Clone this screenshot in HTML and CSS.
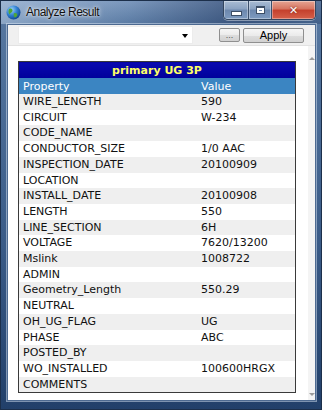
FILE: index.html
```html
<!DOCTYPE html>
<html lang="en">
<head>
  <meta charset="UTF-8">
  <title>Analyze Result</title>
  <link rel="stylesheet" href="styles.css">
</head>
<body>
  <div class="window">
    <div class="titlebar">
      <svg class="app-icon" width="15" height="15" viewBox="0 0 15 15">
        <defs>
          <radialGradient id="globe" cx="0.35" cy="0.3" r="0.8">
            <stop offset="0" stop-color="#9fd4ff"/>
            <stop offset="0.5" stop-color="#2f7fd0"/>
            <stop offset="1" stop-color="#0b3c86"/>
          </radialGradient>
        </defs>
        <circle cx="7.5" cy="7.5" r="7" fill="url(#globe)"/>
        <path d="M3 4 C5 3 7 4 6.5 6 C6 8 4 7.5 3.5 9.5 C2.5 8 2 6 3 4 Z" fill="#4fa53a"/>
        <path d="M8.5 8 C10.5 7.5 12 9 11 11 C10 12.5 8.5 13 8 11.5 C7.6 10.2 7.5 8.5 8.5 8 Z" fill="#4fa53a"/>
      </svg>
      <span class="title">Analyze Result</span>
      <div class="caption-buttons">
        <div class="cap-btn cap-min"><span class="min-glyph"></span></div>
        <div class="cap-btn cap-max"><span class="max-glyph"></span></div>
        <div class="cap-btn cap-close">&#x2715;</div>
      </div>
    </div>

    <div class="client">
      <div class="toolbar">
        <div class="combo"><span class="combo-arrow"></span></div>
        <button class="btn btn-dots">...</button>
        <button class="btn btn-apply">Apply</button>
      </div>

      <div class="panel">
        <div class="panel-body">
          <table class="result">
            <thead>
              <tr><th colspan="2" class="caption">primary UG 3P</th></tr>
              <tr class="head"><th class="col-prop">Property</th><th>Value</th></tr>
            </thead>
            <tbody id="rows"></tbody>
          </table>
        </div>
        <div class="scrollbar">
          <span class="arrow-up"></span>
          <span class="arrow-down"></span>
        </div>
      </div>
    </div>
  </div>

  <script>
    const fields = [
      ['WIRE_LENGTH', '590'],
      ['CIRCUIT', 'W-234'],
      ['CODE_NAME', ''],
      ['CONDUCTOR_SIZE', '1/0 AAC'],
      ['INSPECTION_DATE', '20100909'],
      ['LOCATION', ''],
      ['INSTALL_DATE', '20100908'],
      ['LENGTH', '550'],
      ['LINE_SECTION', '6H'],
      ['VOLTAGE', '7620/13200'],
      ['Mslink', '1008722'],
      ['ADMIN', ''],
      ['Geometry_Length', '550.29'],
      ['NEUTRAL', ''],
      ['OH_UG_FLAG', 'UG'],
      ['PHASE', 'ABC'],
      ['POSTED_BY', ''],
      ['WO_INSTALLED', '100600HRGX'],
      ['COMMENTS', '']
    ];

    const makeRow = ([name, value]) => {
      const tr = document.createElement('tr');
      tr.append(...[name, value].map(text => {
        const td = document.createElement('td');
        td.textContent = text;
        return td;
      }));
      return tr;
    };

    document.getElementById('rows').replaceChildren(...fields.map(makeRow));
  </script>
</body>
</html>
```

FILE: styles.css
```css
body {
  margin: 0;
  font-family: "DejaVu Sans", Verdana, sans-serif;
  background: #2c4a70;
}
.window {
  width: 322px;
  height: 410px;
  box-sizing: border-box;
  display: flex;
  flex-direction: column;
  background: linear-gradient(180deg, #7f9bbf 0px, #55769f 24px, #3a5b87 60%, #22406a 100%);
  border: 1px solid #1c2f4a;
  overflow: hidden;
}
.titlebar {
  height: 23px;
  display: flex;
  align-items: flex-start;
  background: linear-gradient(90deg, rgba(190, 210, 232, 0.5) 0%, rgba(110, 140, 180, 0.15) 40%, rgba(25, 45, 85, 0.5) 75%, rgba(30, 55, 95, 0.35) 100%);
}
.app-icon {
  margin: 4px 0 0 5px;
}
.title {
  margin: 4px 0 0 5px;
  font-family: "Liberation Sans", Arial, sans-serif;
  font-size: 12px;
  letter-spacing: -0.5px;
  color: #101010;
  text-shadow: 0 0 5px rgba(255, 255, 255, 0.9), 0 0 2px rgba(255, 255, 255, 0.8);
}
.caption-buttons {
  margin-left: auto;
  margin-right: 5px;
  display: flex;
  height: 18px;
  border: 1px solid #33465f;
  border-top: none;
  border-radius: 0 0 5px 5px;
  overflow: hidden;
  box-shadow: 0 1px 0 rgba(255, 255, 255, 0.4);
}
.cap-btn {
  display: flex;
  align-items: center;
  justify-content: center;
  background: linear-gradient(180deg, #a9bcd4 0%, #8aa2c1 45%, #6c87ad 50%, #7e9bc0 100%);
  border-right: 1px solid #3b4f6b;
  box-shadow: inset 0 0 0 1px rgba(255, 255, 255, 0.35);
}
.cap-min {
  width: 24px;
}
.cap-max {
  width: 22px;
}
.cap-close {
  width: 43px;
  border-right: none;
  background: linear-gradient(180deg, #e5a493 0%, #d6735f 45%, #c4402c 50%, #d5604a 100%);
  color: #ffffff;
  font-size: 11px;
  font-weight: bold;
  text-shadow: 0 0 2px #6a1a10;
}
.min-glyph {
  width: 9px;
  height: 3px;
  margin-top: 6px;
  background: #ffffff;
  border: 1px solid #3c4e66;
}
.max-glyph {
  width: 7px;
  height: 5px;
  border: 1px solid #3c4e66;
  box-shadow: inset 0 0 0 2px #ffffff;
  background: #6f89ad;
  border-top-width: 2px;
}

.client {
  flex: 1;
  margin: 0 5px 8px 6px;
  display: flex;
  flex-direction: column;
  background: #f0f0f0;
  border: 1px solid #4d6a91;
  box-shadow: 0 0 0 1px rgba(220, 232, 245, 0.5);
}
.toolbar {
  height: 20px;
  display: flex;
  align-items: center;
  padding-left: 10px;
  background: #f0f0f0;
}
.combo {
  position: relative;
  width: 175px;
  height: 18px;
  box-sizing: border-box;
  background: #ffffff;
  border: 1px solid #ececec;
}
.combo-arrow {
  position: absolute;
  right: 4px;
  top: 7px;
  border-left: 3px solid transparent;
  border-right: 3px solid transparent;
  border-top: 4px solid #000000;
}
.btn {
  box-sizing: border-box;
  padding: 0;
  border: 1px solid #8f8f8f;
  border-radius: 2px;
  background: linear-gradient(180deg, #f6f6f6 0%, #ebebeb 50%, #dddddd 51%, #d1d1d1 100%);
  font-family: "Liberation Sans", Arial, sans-serif;
  color: #000000;
}
.btn-dots {
  margin-left: 26px;
  width: 21px;
  height: 14px;
  font-size: 9px;
  line-height: 9px;
  color: #555555;
}
.btn-apply {
  margin-left: 3px;
  width: 61px;
  height: 15px;
  font-size: 11px;
  line-height: 11px;
}

.panel {
  flex: 1;
  display: flex;
  background: #ffffff;
  border-top: 1px solid #e2e2e2;
}
.panel-body {
  flex: 1;
  padding: 15px 0 0 10px;
}
.scrollbar {
  width: 7px;
  display: flex;
  flex-direction: column;
  justify-content: space-between;
  align-items: center;
  padding: 11px 0 4px;
  background: #f4f4f4;
}
.arrow-up {
  border-left: 3px solid transparent;
  border-right: 3px solid transparent;
  border-bottom: 3px solid #9a9a9a;
}
.arrow-down {
  border-left: 3px solid transparent;
  border-right: 3px solid transparent;
  border-top: 3px solid #9a9a9a;
}

.result {
  width: 278px;
  border-collapse: collapse;
  border: 1px solid #3a3a3a;
  font-size: 11px;
  color: #111111;
}
.result th,
.result td {
  padding: 0 0 0 4px;
  text-align: left;
  font-weight: normal;
  white-space: nowrap;
}
.result th.caption {
  height: 16px;
  padding: 0;
  text-align: center;
  font-weight: bold;
  color: #ffff66;
  background: linear-gradient(180deg, #0a0ab0 0%, #00009a 100%);
}
.result tr.head th {
  height: 16px;
  color: #ffffff;
  background: #3b85c2;
}
.result th.col-prop {
  width: 174px;
}
.result td {
  height: 15.7px;
  line-height: 15.7px;
}
.result tbody tr:nth-child(odd) td {
  background: #efefef;
}
```
